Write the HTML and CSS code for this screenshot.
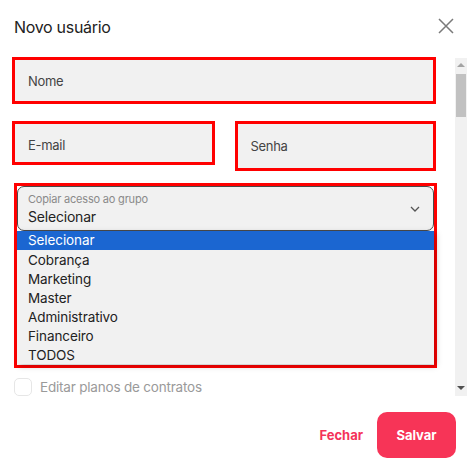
FILE: index.html
```html
<!DOCTYPE html>
<html lang="pt">
<head>
<meta charset="utf-8">
<link rel="stylesheet" href="styles.css">
</head>
<body>
<div class="modal">
  <div class="header">
    <h1 class="title">Novo usuário</h1>
    <svg class="close" width="16" height="16" viewBox="0 0 16 16"><path d="M1 1L15 15M15 1L1 15" stroke="#7a7a7a" stroke-width="1.5" fill="none"/></svg>
  </div>
  <div class="body">
    <div class="content">
      <div class="field field-full"><span class="ph">Nome</span></div>
      <div class="row">
        <div class="field field-email"><span class="ph">E-mail</span></div>
        <div class="field field-senha"><span class="ph">Senha</span></div>
      </div>
      <div class="group">
        <div class="select">
          <div class="select-text">
            <span class="select-label">Copiar acesso ao grupo</span>
            <span class="select-value">Selecionar</span>
          </div>
          <svg class="chev" width="10" height="6" viewBox="0 0 10 6"><path d="M1 1L5 5L9 1" stroke="#555" stroke-width="1.3" fill="none"/></svg>
        </div>
        <ul class="list">
          <li class="opt active">Selecionar</li>
          <li class="opt">Cobrança</li>
          <li class="opt">Marketing</li>
          <li class="opt">Master</li>
          <li class="opt">Administrativo</li>
          <li class="opt">Financeiro</li>
          <li class="opt">TODOS</li>
        </ul>
      </div>
      <label class="check"><span class="box"></span><span class="check-label">Editar planos de contratos</span></label>
    </div>
    <div class="scrollbar">
      <div class="arrow up"></div>
      <div class="thumb"></div>
      <div class="track"></div>
      <div class="arrow down"></div>
    </div>
  </div>
  <div class="footer">
    <button class="btn-link">Fechar</button>
    <button class="btn-primary">Salvar</button>
  </div>
</div>
</body>
</html>
```
FILE: styles.css
```css
* { box-sizing: border-box; }
html, body { margin: 0; padding: 0; background: #fff; }
body { font-family: Inter, "Noto Sans", sans-serif; color: #333; width: 467px; height: 472px; overflow: hidden; }

.modal { display: flex; flex-direction: column; height: 472px; }

.header { height: 57px; display: flex; align-items: flex-start; justify-content: space-between; padding: 17px 13px 0 14px; }
.title { margin: 0; font-size: 16px; font-weight: 400; color: #222; line-height: 20px; letter-spacing: -0.3px; }
.close { margin-top: 1px; }

.body { display: flex; height: 339px; }
.content { flex: 1; overflow: hidden; padding-left: 12px; padding-right: 19px; }

.field { background: #f1f1f1; border: 3px solid #ff0000; display: flex; align-items: center; padding-left: 13px; }
.ph { font-size: 13px; color: #444; letter-spacing: -0.3px; }
.field-full { height: 47px; width: 424px; }
.row { display: flex; align-items: flex-start; margin-top: 17px; }
.field-email { width: 203px; height: 44px; padding-top: 4px; }
.field-senha { width: 202px; height: 50px; margin-left: 20px; padding-top: 0; }

.group { margin-top: 12px; margin-left: 2px; width: 423px; height: 185px; border: 3px solid #ff0000; background: #fff; }
.select { height: 45px; background: #f1f1f1; border: 1px solid #4a4a4a; border-radius: 7px; display: flex; align-items: center; justify-content: space-between; padding: 0 13px 0 10px; }
.select-text { display: flex; flex-direction: column; }
.select-label { font-size: 11px; color: #8a8a8a; line-height: 13px; margin-top: 0; letter-spacing: -0.2px; }
.select-value { font-size: 14px; color: #222; line-height: 17px; margin-top: 2px; letter-spacing: -0.2px; }
.chev { margin-top: 1px; }

.list { list-style: none; margin: 0; padding: 0; background: #f1f1f1; box-shadow: 2px 2px 6px rgba(0,0,0,0.25); }
.opt { height: 19px; line-height: 21px; font-size: 13.5px; color: #222; padding-left: 11px; letter-spacing: -0.1px; overflow: visible; }
.opt.active { background: #1b66d1; color: #fff; line-height: 19px; }

.check { display: flex; align-items: center; margin-top: 10px; margin-left: 2px; }
.box { width: 18px; height: 18px; border: 1px solid #e6e6e6; border-radius: 5px; }
.check-label { margin-left: 8px; font-size: 13.5px; color: #9a9a9a; letter-spacing: -0.2px; }

.scrollbar { width: 12px; background: #f1f1f1; display: flex; flex-direction: column; align-items: center; margin-top: 1px; }
.arrow { width: 0; height: 0; border-left: 4px solid transparent; border-right: 4px solid transparent; }
.arrow.up { border-bottom: 4px solid #a3a3a3; margin-top: 5px; margin-bottom: 7px; }
.arrow.down { border-top: 4px solid #505050; margin-bottom: 6px; }
.thumb { width: 10px; height: 43px; background: #c1c1c1; }
.track { flex: 1; }

.footer { flex: 1; display: flex; justify-content: flex-end; align-items: flex-start; padding: 16px 11px 0 0; }
.btn-link { border: 0; background: none; font-family: inherit; font-size: 13px; font-weight: 700; color: #f4335a; height: 46px; padding: 0; margin-right: 14px; }
.btn-primary { border: 0; background: #f73457; color: #fff; font-family: inherit; font-size: 13px; font-weight: 700; width: 79px; height: 46px; border-radius: 10px; }
```
